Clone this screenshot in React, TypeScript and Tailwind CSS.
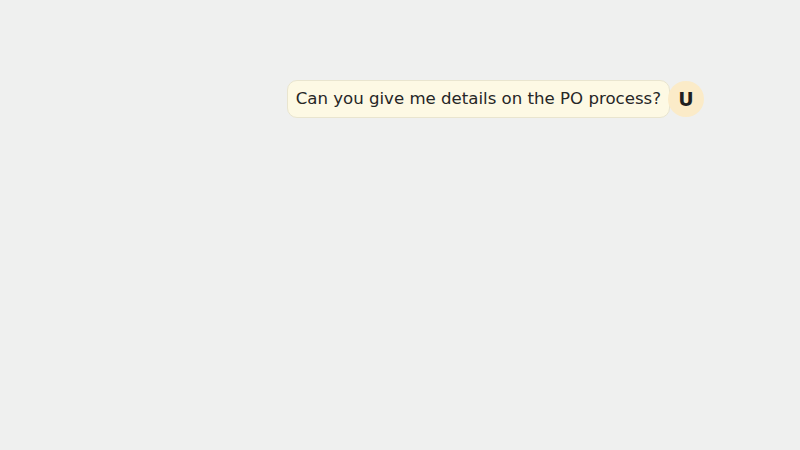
export default function App() {
  return (
    <main className="w-screen h-screen bg-[#eff0ef] font-['DejaVu_Sans',sans-serif]">
      <div className="flex justify-end items-center pt-20 pr-24">
        <div className="rounded-[10px] border border-[#e9e5cf] bg-[#fdf9e4] px-2 py-1.5 text-[16.6px] leading-6 text-[#262626]">
          Can you give me details on the PO process?
        </div>
        <div className="w-9 h-9 -ml-0.5 rounded-full bg-[#fbebc8] flex justify-center items-center text-[19px] font-bold text-[#1f1f1f]">
          U
        </div>
      </div>
    </main>
  );
}
